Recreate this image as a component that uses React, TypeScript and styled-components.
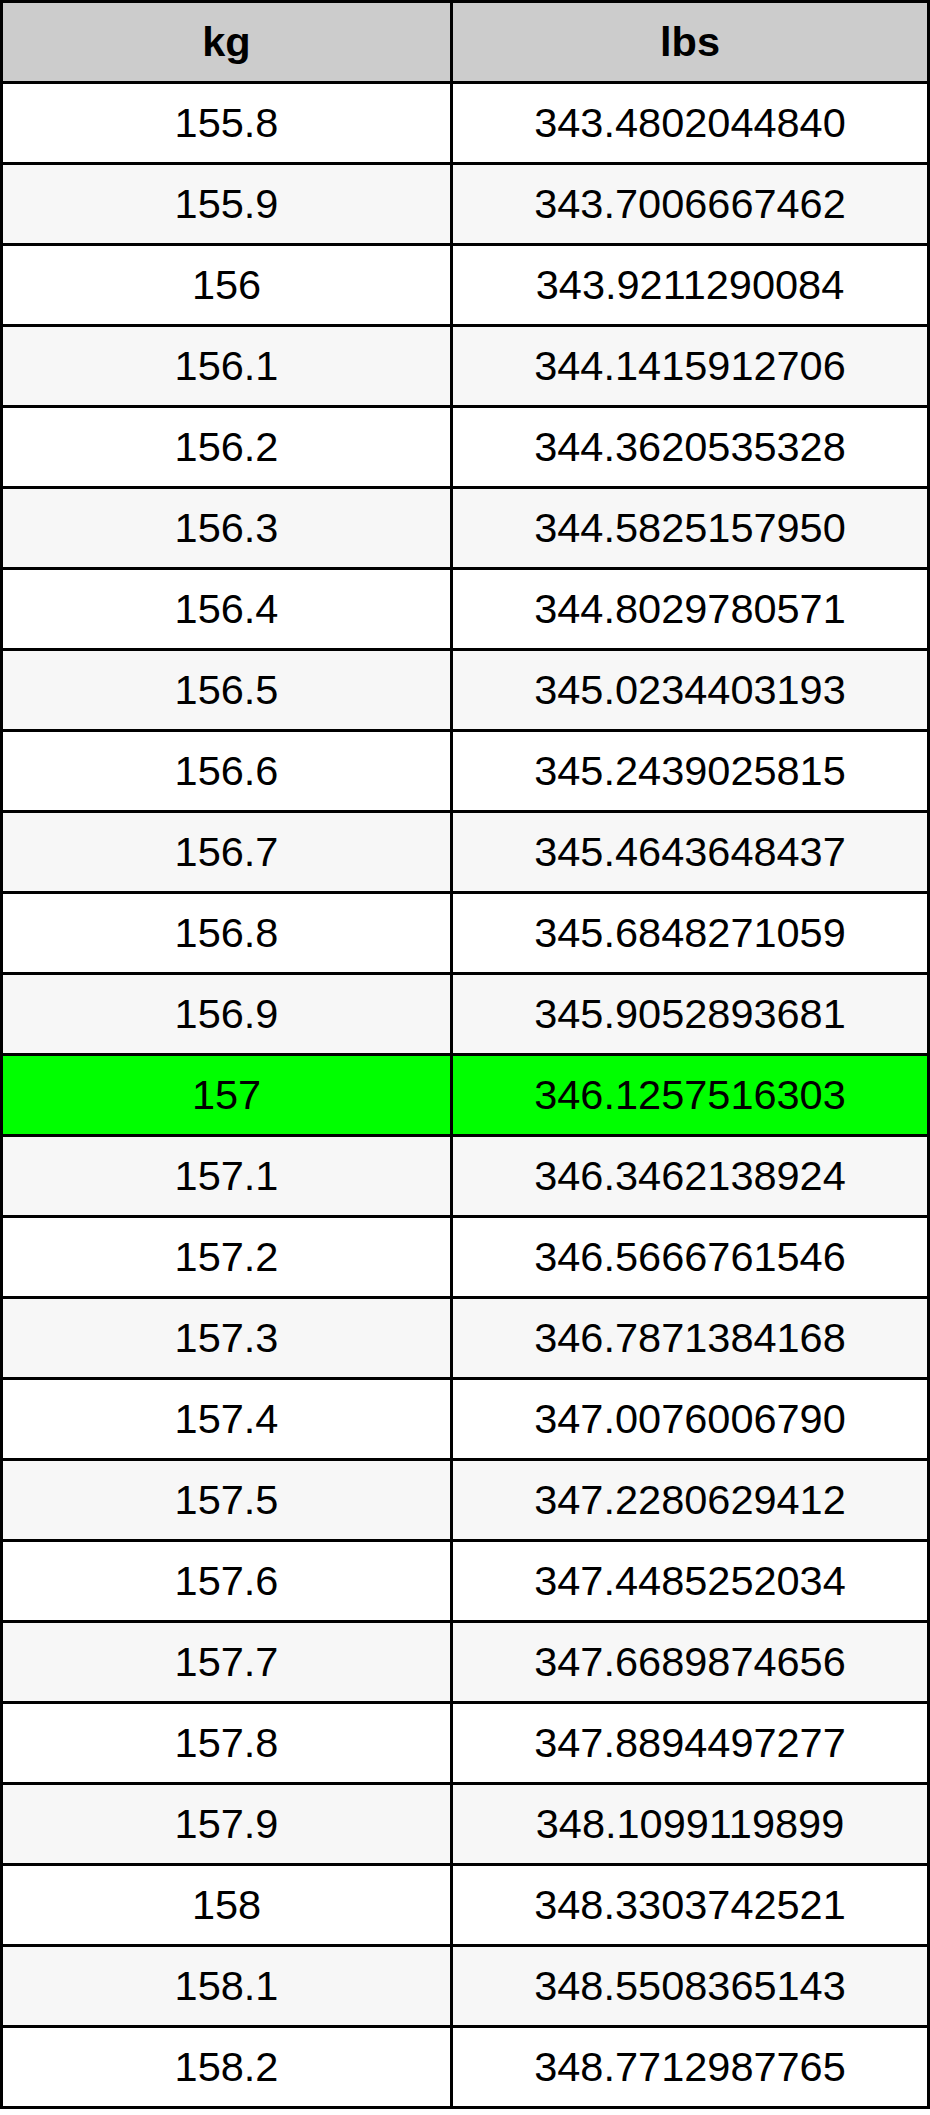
import React from "react";
import styled, { createGlobalStyle } from "styled-components";

const Global = createGlobalStyle`
  html, body { margin: 0; padding: 0; background: #ffffff; }
  body { font-family: "Liberation Sans", Arial, Helvetica, sans-serif; }
`;

const Table = styled.table`
  width: 930px;
  border-collapse: collapse;
  table-layout: fixed;
  border: 3px solid #000000;
  font-family: "Liberation Sans", Arial, Helvetica, sans-serif;
  font-size: 41.5px;
  color: #000000;
`;

const HeadCell = styled.th<{ $w?: string }>`
  width: ${(p) => p.$w ?? "auto"};
  height: 78px;
  padding: 0;
  border: 3px solid #000000;
  background: #cccccc;
  font-weight: bold;
  text-align: center;
  vertical-align: middle;
`;

const Row = styled.tr<{ $tone: "plain" | "stripe" | "hit" }>`
  background: ${(p) =>
    p.$tone === "hit" ? "#00ff00" : p.$tone === "stripe" ? "#f7f7f7" : "#ffffff"};
`;

const Cell = styled.td`
  height: 78px;
  padding: 0;
  border: 3px solid #000000;
  text-align: center;
  vertical-align: middle;
  font-weight: normal;
`;

const rows: [string, string][] = [
  ["155.8", "343.4802044840"],
  ["155.9", "343.7006667462"],
  ["156", "343.9211290084"],
  ["156.1", "344.1415912706"],
  ["156.2", "344.3620535328"],
  ["156.3", "344.5825157950"],
  ["156.4", "344.8029780571"],
  ["156.5", "345.0234403193"],
  ["156.6", "345.2439025815"],
  ["156.7", "345.4643648437"],
  ["156.8", "345.6848271059"],
  ["156.9", "345.9052893681"],
  ["157", "346.1257516303"],
  ["157.1", "346.3462138924"],
  ["157.2", "346.5666761546"],
  ["157.3", "346.7871384168"],
  ["157.4", "347.0076006790"],
  ["157.5", "347.2280629412"],
  ["157.6", "347.4485252034"],
  ["157.7", "347.6689874656"],
  ["157.8", "347.8894497277"],
  ["157.9", "348.1099119899"],
  ["158", "348.3303742521"],
  ["158.1", "348.5508365143"],
  ["158.2", "348.7712987765"],
];

export default function App() {
  return (
    <>
      <Global />
      <Table>
        <thead>
          <tr>
            <HeadCell $w="447px">kg</HeadCell>
            <HeadCell>lbs</HeadCell>
          </tr>
        </thead>
        <tbody>
          {rows.map(([kg, lbs], i) => (
            <Row key={kg} $tone={kg === "157" ? "hit" : i % 2 === 1 ? "stripe" : "plain"}>
              <Cell>{kg}</Cell>
              <Cell>{lbs}</Cell>
            </Row>
          ))}
        </tbody>
      </Table>
    </>
  );
}
